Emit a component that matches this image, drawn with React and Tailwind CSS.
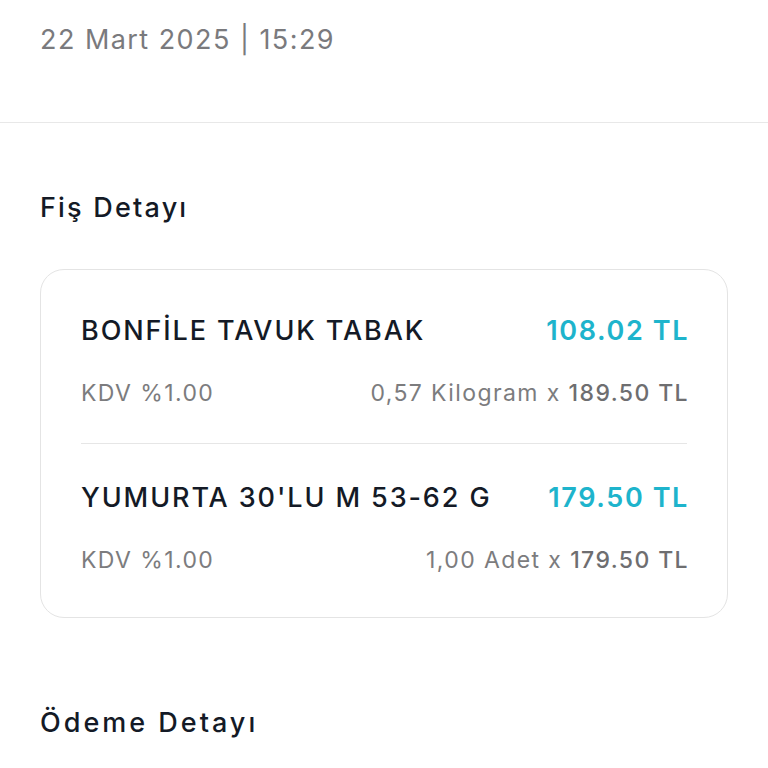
export default function App() {
  const font = { fontFamily: 'Inter, Lato, sans-serif' };
  const items = [
    { name: "BONFİLE TAVUK TABAK", price: "108.02 TL", qty: "0,57 Kilogram x ", unit: "189.50 TL" },
    { name: "YUMURTA 30'LU M 53-62 G", price: "179.50 TL", qty: "1,00 Adet x ", unit: "179.50 TL" },
  ];
  return (
    <div className="w-[768px] h-[768px] bg-white overflow-hidden" style={font}>
      <div className="h-[123px] border-b border-[#e8e8e8] px-10 pt-[23px]">
        <div className="text-[27px] leading-[34px] tracking-[1.45px] text-[#7a7a7d]">22 Mart 2025 | 15:29</div>
      </div>
      <div className="px-10">
        <div className="pt-[68px] text-[27px] leading-[34px] tracking-[2.2px] font-medium text-[#141a26]">Fiş Detayı</div>
        <div className="mt-[44px] rounded-[24px] border border-[#e4e4e4] px-10 pt-[44px] pb-[42px]">
          {items.map((it, i) => (
            <div key={i}>
              {i > 0 && <div className="h-px bg-[#e6e6e6] mt-[35px] mb-[37px]" />}
              <div className="flex justify-between items-center text-[27px] leading-[34px] font-medium">
                <span className="text-[#141a26] tracking-[1.9px]">{it.name}</span>
                <span className="text-[#1eb4cc] font-semibold tracking-[1.6px] -mr-[2px]">{it.price}</span>
              </div>
              <div className="mt-[30px] flex justify-between items-center text-[23px] leading-[30px] tracking-[1.4px] text-[#7c7c7e]">
                <span>KDV %1.00</span>
                <span className="-mr-[2px]">
                  {it.qty}
                  <span className="font-medium text-[#6e6e70]">{it.unit}</span>
                </span>
              </div>
            </div>
          ))}
        </div>
        <div className="mt-[88px] text-[27px] leading-[34px] tracking-[3px] font-medium text-[#141a26]">Ödeme Detayı</div>
      </div>
    </div>
  );
}
